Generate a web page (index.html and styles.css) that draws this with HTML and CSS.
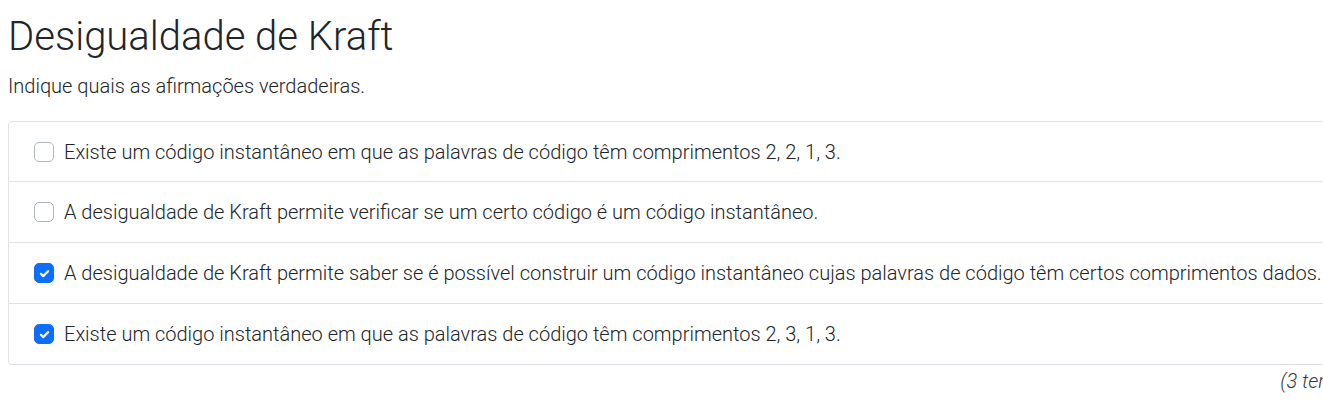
FILE: index.html
```html
<!DOCTYPE html>
<html lang="pt">
<head>
<meta charset="utf-8">
<title>Desigualdade de Kraft</title>
<link rel="stylesheet" href="styles.css">
</head>
<body>
<main class="page">
  <h1 class="title">Desigualdade de Kraft</h1>
  <p class="lead">Indique quais as afirmações verdadeiras.</p>
  <ul class="options">
    <li class="option"><span class="box"></span><span class="label">Existe um código instantâneo em que as palavras de código têm comprimentos 2, 2, 1, 3.</span></li>
    <li class="option"><span class="box"></span><span class="label">A desigualdade de Kraft permite verificar se um certo código é um código instantâneo.</span></li>
    <li class="option"><span class="box checked"><svg viewBox="0 0 20 20" width="13" height="13"><path d="M4.5 10.5l3.5 3.5 7.5-7.5" fill="none" stroke="#fff" stroke-width="3.4" stroke-linecap="round" stroke-linejoin="round"/></svg></span><span class="label">A desigualdade de Kraft permite saber se é possível construir um código instantâneo cujas palavras de código têm certos comprimentos dados.</span></li>
    <li class="option"><span class="box checked"><svg viewBox="0 0 20 20" width="13" height="13"><path d="M4.5 10.5l3.5 3.5 7.5-7.5" fill="none" stroke="#fff" stroke-width="3.4" stroke-linecap="round" stroke-linejoin="round"/></svg></span><span class="label">Existe um código instantâneo em que as palavras de código têm comprimentos 2, 3, 1, 3.</span></li>
  </ul>
  <p class="attempts">(3 tentativas)</p>
</main>
</body>
</html>
```

FILE: styles.css
```css
html, body {
  margin: 0;
  padding: 0;
  overflow: hidden;
  background: #fff;
}
body {
  font-family: Roboto, "Liberation Sans", sans-serif;
  color: #212529;
  font-weight: 300;
}
.page {
  width: 1384px;
  padding: 13px 8px 0 8px;
}
.title {
  margin: 0;
  font-size: 40px;
  line-height: 48px;
  font-weight: 300;
}
.lead {
  margin: 10px 0 0 0;
  font-size: 20px;
  line-height: 30px;
}
.options {
  list-style: none;
  margin: 20px 0 0 0;
  padding: 0;
  border: 1px solid #dee2e6;
  border-radius: 4px;
}
.option {
  display: flex;
  align-items: center;
  gap: 10px;
  height: 61px;
  padding: 0 25px;
  border-top: 1px solid #dee2e6;
  box-sizing: border-box;
  font-size: 20px;
  line-height: 30px;
}
.option:first-child {
  border-top: none;
  height: 59px;
}
.box {
  flex: none;
  width: 20px;
  height: 20px;
  box-sizing: border-box;
  border: 1px solid #adb5bd;
  border-radius: 5px;
  display: flex;
  align-items: center;
  justify-content: center;
}
.box.checked {
  background: #0d6efd;
  border-color: #0d6efd;
}
.attempts {
  margin: 1px 0 0 0;
  text-align: right;
  font-style: italic;
  font-size: 20px;
  line-height: 30px;
  color: #343a40;
}
```
